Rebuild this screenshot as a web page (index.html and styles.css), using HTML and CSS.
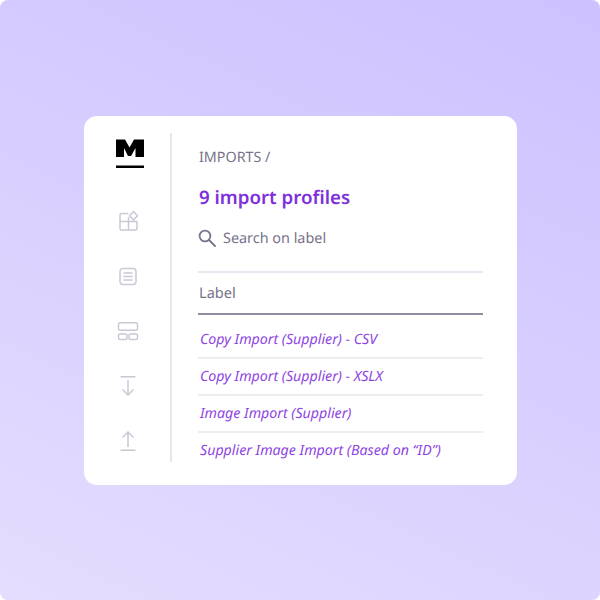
FILE: index.html
```html
<!DOCTYPE html>
<html lang="en">
<head>
<meta charset="utf-8">
<title>Imports</title>
<link rel="stylesheet" href="styles.css">
</head>
<body>
<div class="stage">
<div class="card">
  <nav class="rail">
    <svg class="logo" width="30" height="30" viewBox="0 0 30 30">
      <path d="M1 1.500h9l4.500 8 4.500-8h10V19h-8.500V10L16 18h-3L9 10V19H1z" fill="#000"/>
      <rect x="1" y="27.500" width="28" height="2.500" fill="#000"/>
    </svg>
    <svg class="ic" width="22" height="22" viewBox="0 0 22 22" fill="none" stroke="#cbc8d6" stroke-width="1.500" stroke-linejoin="round">
      <path d="M11.500 7V20H4.500A1.500 1.500 0 0 1 3 18.500V5a1.500 1.500 0 0 1 1.500-1.500H11.500"/>
      <path d="M3 11.500H20V18.500A1.500 1.500 0 0 1 18.500 20H11.500"/>
      <path d="M16.500 1.500l4 4.300-4 4.300-4-4.300z"/>
    </svg>
    <svg class="ic" width="22" height="22" viewBox="0 0 22 22" fill="none" stroke="#cbc8d6" stroke-width="1.500" stroke-linecap="round">
      <rect x="3" y="3.500" width="16" height="16" rx="3"/>
      <path d="M7 8h8M7 11.500h8M7 15h8"/>
    </svg>
    <svg class="ic" width="22" height="22" viewBox="0 0 22 22" fill="none" stroke="#cbc8d6" stroke-width="1.500">
      <rect x="1.500" y="2.800" width="19" height="7.500" rx="1.500"/>
      <rect x="1.500" y="14" width="8.500" height="5.500" rx="1.500"/>
      <rect x="12" y="14" width="8.500" height="5.500" rx="1.500"/>
    </svg>
    <svg class="ic" width="22" height="22" viewBox="0 0 22 22" fill="none" stroke="#cbc8d6" stroke-width="1.500">
      <path d="M3.500 1.800h15M11 5v15M5.500 14.500L11 20l5.500-5.500"/>
    </svg>
    <svg class="ic" width="22" height="22" viewBox="0 0 22 22" fill="none" stroke="#cbc8d6" stroke-width="1.500">
      <path d="M3.500 20.200h15M11 17V2M5.500 7.500L11 2l5.500 5.500"/>
    </svg>
  </nav>
  <main class="content">
    <div class="crumb">IMPORTS /</div>
    <h1 class="title">9 import profiles</h1>
    <div class="search">
      <svg width="18" height="18" viewBox="0 0 18 18" fill="none" stroke="#76738a" stroke-width="1.800">
        <circle cx="7" cy="7" r="5.400"/>
        <path d="M11 11l6 6" stroke-linecap="round"/>
      </svg>
      <span>Search on label</span>
    </div>
    <div class="head">Label</div>
    <ul class="rows">
      <li>Copy Import (Supplier) - CSV</li>
      <li>Copy Import (Supplier) - XSLX</li>
      <li>Image Import (Supplier)</li>
      <li>Supplier Image Import (Based on “ID”)</li>
    </ul>
  </main>
</div>
</div>
</body>
</html>
```
FILE: styles.css
```css
* { box-sizing: border-box; }
html, body { margin: 0; height: 600px; }
body {
  width: 600px;
  background: #fff;
  font-family: "Noto Sans", sans-serif;
  text-rendering: geometricPrecision;
  overflow: hidden;
}
.stage {
  height: 600px;
  padding: 116px 83px 115px 84px;
  background: linear-gradient(205deg, #cdc1ff 0%, #e4ddfe 100%);
  border-radius: 8px;
}
.card {
  display: flex;
  height: 369px;
  padding: 17px 34px 23px 31px;
  background: #fff;
  border-radius: 13px;
}
.rail {
  width: 57px;
  border-right: 2px solid #e7e6ee;
  display: flex;
  flex-direction: column;
  padding-top: 5px;
}
.logo { display: block; margin-bottom: 42px; }
.ic { display: block; margin: 0 0 33px 2px; }
.ic:last-child { margin-bottom: 0; }
.content { flex: 1; padding-left: 26px; }
.crumb {
  padding-left: 1px;
  font-size: 14.3px;
  line-height: 20px;
  color: #76738a;
  margin-top: 15px;
}
.title {
  margin: 18px 0 0;
  padding-left: 1px;
  font-size: 18.7px;
  line-height: 24px;
  font-weight: 600;
  color: #7e30dc;
}
.search {
  display: flex;
  align-items: center;
  gap: 7px;
  margin-top: 17px;
  height: 22px;
  font-size: 14.4px;
  color: #76738a;
}
.head {
  margin-top: 22px;
  height: 44px;
  padding-left: 1px;
  border-top: 2px solid #e9e8f0;
  border-bottom: 2px solid #918c9f;
  font-size: 14.6px;
  line-height: 40px;
  color: #76738a;
}
.rows { list-style: none; margin: 7px 0 0; padding: 0; }
.rows li {
  height: 37px;
  padding-left: 2px;
  border-bottom: 2px solid #eeedf2;
  font-size: 14.2px;
  line-height: 36px;
  font-style: italic;
  color: #8d44e2;
  white-space: nowrap;
}
.rows li:last-child { border-bottom: 0; }
```
